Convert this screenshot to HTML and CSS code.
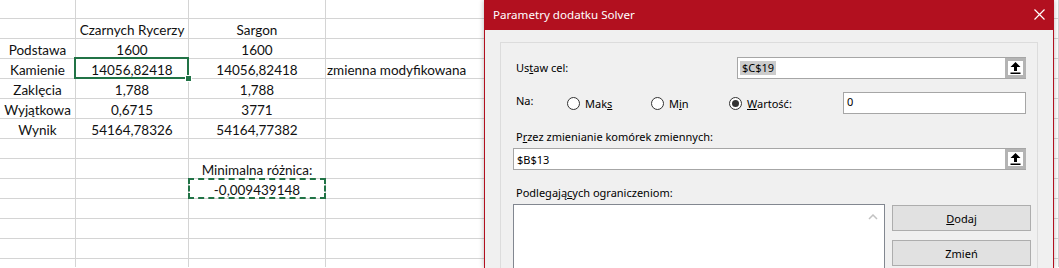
FILE: index.html
```html
<!DOCTYPE html>
<html lang="pl">
<head>
<meta charset="utf-8">
<title>Solver</title>
<link rel="stylesheet" href="styles.css">
</head>
<body>
<div class="sheet">
  <div class="c"></div><div class="c"></div><div class="c"></div><div class="c"></div>
  <div class="c"></div><div class="c ctr">Czarnych Rycerzy</div><div class="c ctr">Sargon</div><div class="c"></div>
  <div class="c ctr">Podstawa</div><div class="c ctr">1600</div><div class="c ctr">1600</div><div class="c"></div>
  <div class="c ctr">Kamienie</div><div class="c ctr sel">14056,82418<span class="handle"></span></div><div class="c ctr">14056,82418</div><div class="c left">zmienna modyfikowana</div>
  <div class="c ctr">Zaklęcia</div><div class="c ctr">1,788</div><div class="c ctr">1,788</div><div class="c"></div>
  <div class="c ctr">Wyjątkowa</div><div class="c ctr">0,6715</div><div class="c ctr">3771</div><div class="c"></div>
  <div class="c ctr">Wynik</div><div class="c ctr">54164,78326</div><div class="c ctr">54164,77382</div><div class="c"></div>
  <div class="c"></div><div class="c"></div><div class="c"></div><div class="c"></div>
  <div class="c"></div><div class="c"></div><div class="c ctr">Minimalna różnica:</div><div class="c"></div>
  <div class="c"></div><div class="c"></div><div class="c ctr ants">-0,009439148</div><div class="c"></div>
  <div class="c"></div><div class="c"></div><div class="c"></div><div class="c"></div>
  <div class="c"></div><div class="c"></div><div class="c"></div><div class="c"></div>
  <div class="c"></div><div class="c"></div><div class="c"></div><div class="c"></div>
  <div class="c"></div><div class="c"></div><div class="c"></div><div class="c"></div>
</div>

<div class="dialog">
  <div class="titlebar">
    <span class="title">Parametry dodatku Solver</span>
    <svg class="close" width="11" height="11" viewBox="0 0 11 11"><path d="M0.5 0.5L10.5 10.5M10.5 0.5L0.5 10.5" stroke="#fff" stroke-width="1.2" fill="none"/></svg>
  </div>
  <div class="body">
    <div class="group">
      <div class="row r1">
        <span class="lbl">Us<u>t</u>aw cel:</span>
        <div class="refbox short"><span class="hl">$C$19</span><span class="pick"><svg width="11" height="12" viewBox="0 0 11 12"><path d="M5.5 0L10.5 5H7V9H4V5H0.5Z" fill="#000"/><rect x="0.5" y="10.5" width="10" height="1.5" fill="#000"/></svg></span></div>
      </div>
      <div class="row r2">
        <span class="lbl na">Na:</span>
        <span class="radio w-maks"><span class="dot"></span><span>Mak<u>s</u></span></span>
        <span class="radio w-min"><span class="dot"></span><span>M<u>i</u>n</span></span>
        <span class="radio w-wart"><span class="dot on"></span><span><u>W</u>artość:</span></span>
        <div class="field">0</div>
      </div>
      <div class="cap">P<u>r</u>zez zmienianie komórek zmiennych:</div>
      <div class="refbox long"><span class="val">$B$13</span><span class="pick"><svg width="11" height="12" viewBox="0 0 11 12"><path d="M5.5 0L10.5 5H7V9H4V5H0.5Z" fill="#000"/><rect x="0.5" y="10.5" width="10" height="1.5" fill="#000"/></svg></span></div>
      <div class="cap">Podlegają<u>c</u>ych ograniczeniom:</div>
      <div class="row r4">
        <div class="list">
          <svg class="chev" width="10" height="6" viewBox="0 0 10 6"><path d="M1 5L5 1L9 5" stroke="#c2c2c2" stroke-width="1.5" fill="none"/></svg>
        </div>
        <div class="btns">
          <button class="btn"><u>D</u>odaj</button>
          <button class="btn">Zmień</button>
        </div>
      </div>
    </div>
  </div>
</div>
</body>
</html>
```
FILE: styles.css
```css
html, body {
  margin: 0;
  padding: 0;
  background: #ffffff;
  overflow: hidden;
}
body {
  width: 1059px;
  height: 268px;
  position: relative;
}
.sheet {
  display: grid;
  grid-template-columns: 76px 113px 137px 1fr;
  grid-auto-rows: 20px;
  margin-top: -1px;
  height: 268px;
  overflow: hidden;
  font-family: "Lato", "Liberation Sans", sans-serif;
  font-size: 13.5px;
  color: #111;
}
.c {
  border-right: 1px solid #d4d4d4;
  border-bottom: 1px solid #d4d4d4;
  line-height: 18px;
  padding-top: 2px;
  white-space: nowrap;
  overflow: visible;
  position: relative;
}
.ctr { text-align: center; }
.left { padding-left: 1px; }
.sel::after {
  content: "";
  position: absolute;
  left: -2px;
  top: -2px;
  right: -1px;
  bottom: -1px;
  border: 2px solid #217346;
}
.handle {
  position: absolute;
  right: -4px;
  bottom: -4px;
  width: 5px;
  height: 5px;
  background: #217346;
  border: 1px solid #fff;
  z-index: 2;
}
.ants::after {
  content: "";
  position: absolute;
  left: -1px;
  top: -1px;
  right: -1px;
  bottom: -1px;
  border: 2px dashed #217346;
}

/* dialog */
.dialog {
  position: absolute;
  left: 484px;
  top: 0;
  width: 568px;
  height: 268px;
  overflow: hidden;
  border-left: 1px solid #b2101f;
  border-right: 1px solid #b2101f;
  background: #f0f0f0;
  box-shadow: 0 0 5px rgba(0,0,0,0.28);
  font-family: "Noto Sans", "Open Sans", sans-serif;
  font-size: 11px;
  color: #000;
}
.titlebar {
  height: 30px;
  background: #b2101f;
  display: flex;
  align-items: center;
  justify-content: space-between;
  padding: 0 9px 0 9px;
  margin: 0 -1px;
}
.title {
  color: #fff;
  font-size: 11.6px;
  padding-bottom: 1px;
}
.close { margin-top: -1px; }
.body {
  padding: 12px 15px 0 15px;
}
.group {
  border: 1px solid #dcdcdc;
  padding: 14px 6px 20px 12px;
  height: 260px;
}
.row {
  display: flex;
  align-items: center;
}
.r1 {
  justify-content: space-between;
  height: 22px;
}
.lbl { padding-left: 3px; }
.r1 .lbl { margin-top: -1px; }
.refbox {
  height: 20px;
  border: 1px solid #a6a6a6;
  background: #fff;
  display: flex;
  align-items: center;
  justify-content: space-between;
  margin-right: 5px;
  box-sizing: content-box;
}
.short { width: 287px; }
.long { width: 511px; margin-top: 3px; }
.hl {
  background: #cccccc;
  margin-left: 2px;
  padding: 0 2px;
  line-height: 14px;
}
.val { margin-left: 3px; }
.pick {
  width: 15px;
  height: 14px;
  border: 3px solid #b4b4b4;
  background: #fff;
  display: flex;
  align-items: center;
  justify-content: center;
  margin-right: -1px;
}
.r2 {
  margin-top: 13px;
  height: 22px;
}
.na {
  width: 51px;
  margin-top: -6px;
}
.radio {
  display: flex;
  align-items: center;
  gap: 5px;
  margin-top: 1px;
}
.w-maks { width: 84px; }
.w-min { width: 78px; }
.w-wart { width: 114px; }
.dot {
  width: 11px;
  height: 11px;
  border: 1px solid #333;
  border-radius: 50%;
  background: #fff;
  position: relative;
  flex: none;
}
.dot.on::after {
  content: "";
  position: absolute;
  left: 2px;
  top: 2px;
  width: 7px;
  height: 7px;
  border-radius: 50%;
  background: #333;
}
.field {
  border: 1px solid #a6a6a6;
  background: #fff;
  line-height: 18px;
  padding-left: 3px;
  box-sizing: border-box;
  width: 183px;
  height: 22px;
}
.cap {
  margin-top: 15px;
  height: 16px;
  line-height: 16px;
  padding-left: 3px;
}
.r4 {
  margin-top: 3px;
  align-items: flex-start;
  gap: 7px;
}
.list {
  width: 370px;
  height: 80px;
  border: 1px solid #828790;
  background: #fff;
  position: relative;
}
.chev {
  position: absolute;
  right: 6px;
  top: 9px;
}
.btns {
  display: flex;
  flex-direction: column;
  gap: 9px;
  margin-top: 1px;
}
.btn {
  width: 139px;
  height: 26px;
  border: 1px solid #adadad;
  background: #e1e1e1;
  font-family: "Noto Sans", "Open Sans", sans-serif;
  font-size: 11px;
  color: #000;
  padding: 0;
  margin: 0;
}
```
